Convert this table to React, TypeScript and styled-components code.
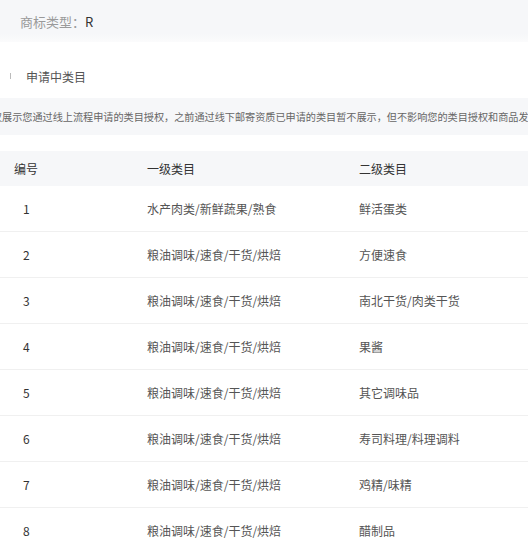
import React from "react";
import styled, { createGlobalStyle } from "styled-components";

const Global = createGlobalStyle`
  html, body { margin: 0; padding: 0; background: #fff; }
  body { font-family: "Noto Sans CJK SC", "Noto Sans", sans-serif; width: 528px; height: 550px; overflow: hidden; }
`;

const Page = styled.div`
  width: 528px;
  height: 550px;
  overflow: hidden;
  display: flex;
  flex-direction: column;
`;

const TypeBar = styled.div`
  height: 42px;
  flex-shrink: 0;
  display: flex;
  align-items: center;
  padding-left: 20px;
  font-size: 13px;
  color: #9a9a9a;
  background: linear-gradient(to bottom, #f6f7f9 0, #f6f7f9 34px, #fbfbfc 42px);
`;

const TypeValue = styled.span`
  color: #333;
`;

const SectionTitle = styled.div`
  height: 44px;
  flex-shrink: 0;
  margin-top: 12px;
  display: flex;
  align-items: center;
  padding-left: 10px;
  gap: 15px;
  font-size: 12px;
  color: #555;
`;

const Marker = styled.span`
  width: 1px;
  height: 6px;
  background: #bbb;
`;

const Notice = styled.div`
  height: 37px;
  flex-shrink: 0;
  display: flex;
  align-items: center;
  background: #f6f7f9;
  overflow: hidden;
  white-space: nowrap;
  font-size: 10.15px;
  color: #666;
`;

const NoticeText = styled.span`
  margin-left: -8px;
`;

const Table = styled.div`
  margin-top: 16px;
  display: flex;
  flex-direction: column;
  font-size: 12px;
`;

const Row = styled.div<{ $head?: boolean }>`
  display: grid;
  grid-template-columns: 147px 212px 1fr;
  align-items: center;
  flex-shrink: 0;
  height: ${(p) => (p.$head ? "35px" : "46px")};
  background: ${(p) => (p.$head ? "#f6f7f9" : "#fff")};
  border-bottom: ${(p) => (p.$head ? "none" : "1px solid #f0f0f0")};
  box-sizing: border-box;
  color: ${(p) => (p.$head ? "#333" : "#555")};
`;

const NumCell = styled.div<{ $head?: boolean }>`
  padding-left: ${(p) => (p.$head ? "14px" : "23px")};
  color: #333;
`;

const Cell = styled.div``;

const rows: [string, string][] = [
  ["水产肉类/新鲜蔬果/熟食", "鲜活蛋类"],
  ["粮油调味/速食/干货/烘焙", "方便速食"],
  ["粮油调味/速食/干货/烘焙", "南北干货/肉类干货"],
  ["粮油调味/速食/干货/烘焙", "果酱"],
  ["粮油调味/速食/干货/烘焙", "其它调味品"],
  ["粮油调味/速食/干货/烘焙", "寿司料理/料理调料"],
  ["粮油调味/速食/干货/烘焙", "鸡精/味精"],
  ["粮油调味/速食/干货/烘焙", "醋制品"],
];

export default function App() {
  return (
    <Page>
      <Global />
      <TypeBar>
        商标类型：<TypeValue>R</TypeValue>
      </TypeBar>
      <SectionTitle>
        <Marker />
        申请中类目
      </SectionTitle>
      <Notice>
        <NoticeText>
          仅展示您通过线上流程申请的类目授权，之前通过线下邮寄资质已申请的类目暂不展示，但不影响您的类目授权和商品发布
        </NoticeText>
      </Notice>
      <Table>
        <Row $head>
          <NumCell $head>编号</NumCell>
          <Cell>一级类目</Cell>
          <Cell>二级类目</Cell>
        </Row>
        {rows.map(([a, b], i) => (
          <Row key={i}>
            <NumCell>{i + 1}</NumCell>
            <Cell>{a}</Cell>
            <Cell>{b}</Cell>
          </Row>
        ))}
      </Table>
    </Page>
  );
}
